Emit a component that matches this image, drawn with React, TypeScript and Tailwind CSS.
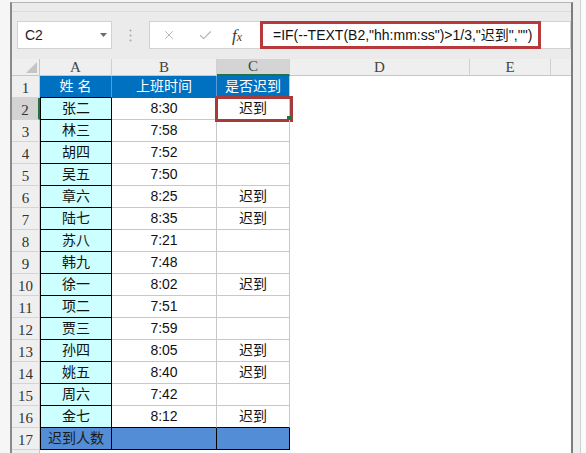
import { X, Check } from 'lucide-react'

const ROWS: { name: string; time: string; late: boolean }[] = [
  { name: '张二', time: '8:30', late: true },
  { name: '林三', time: '7:58', late: false },
  { name: '胡四', time: '7:52', late: false },
  { name: '吴五', time: '7:50', late: false },
  { name: '章六', time: '8:25', late: true },
  { name: '陆七', time: '8:35', late: true },
  { name: '苏八', time: '7:21', late: false },
  { name: '韩九', time: '7:48', late: false },
  { name: '徐一', time: '8:02', late: true },
  { name: '项二', time: '7:51', late: false },
  { name: '贾三', time: '7:59', late: false },
  { name: '孙四', time: '8:05', late: true },
  { name: '姚五', time: '8:40', late: true },
  { name: '周六', time: '7:42', late: false },
  { name: '金七', time: '8:12', late: true },
]

const sans = "font-['Liberation_Sans','Noto_Sans_CJK_SC',sans-serif]"
const serif = "font-['Liberation_Serif','Noto_Sans_CJK_SC',serif]"

function RowHead({ n, active }: { n?: number; active?: boolean }) {
  return (
    <div
      className={`w-[28px] shrink-0 flex items-end justify-center pb-[1px] text-[15px] leading-none text-[#333] border-b border-[#d4d4d4] ${serif} ${
        active ? 'bg-[#d3d3d3] border-r-2 border-r-[#217346]' : 'bg-[#efefef] border-r border-r-[#c6c6c6]'
      }`}
    >
      {n}
    </div>
  )
}

function ColHead({ label, w, active }: { label: string; w: string; active?: boolean }) {
  return (
    <div
      className={`${w} shrink-0 flex items-center justify-center text-[15px] text-[#444] border-r border-[#d0d0d0] ${serif} ${
        active ? 'bg-[#d4d4d4] border-b-2 border-b-[#217346]' : 'bg-[#efefef] border-b border-b-[#c6c6c6]'
      }`}
    >
      {label}
    </div>
  )
}

export default function App() {
  return (
    <div className={`w-[586px] h-[453px] overflow-hidden bg-[#f6f6f6] flex ${sans}`}>
      <div className="w-[10px] shrink-0" />
      <div className="w-[563px] shrink-0 mt-[2px] flex flex-col border-t border-t-[#b4b4b4] border-l-2 border-r-2 border-l-[#8a8a8a] border-r-[#7d7d7d] bg-[#ebebeb]">
        <div className="h-[9px] shrink-0 border-b border-[#dcdcdc]" />

        {/* formula bar */}
        <div className="h-[47px] shrink-0 flex items-start pt-[9px]">
          <div className="ml-[5px] w-[95px] h-[28px] bg-white border border-[#d2d2d2] flex items-center justify-between pl-[7px] pr-[3px]">
            <span className="text-[14px] text-[#222]">C2</span>
            <svg width="9" height="6" viewBox="0 0 9 6">
              <path d="M1 1h7L4.5 5z" fill="#6b6b6b" />
            </svg>
          </div>
          <div className="w-[37px] h-[28px] flex items-center justify-center">
            <svg width="3" height="13" viewBox="0 0 3 13">
              <circle cx="1.5" cy="1.5" r="1" fill="#a8a8a8" />
              <circle cx="1.5" cy="6.5" r="1" fill="#a8a8a8" />
              <circle cx="1.5" cy="11.5" r="1" fill="#a8a8a8" />
            </svg>
          </div>
          <div className="flex-1 h-[28px] bg-white border border-[#d2d2d2] flex items-stretch">
            <div className="w-[110px] shrink-0 flex items-center">
              <X className="ml-[12px] w-[14px] h-[14px] text-[#b3b3b3]" strokeWidth={1.6} />
              <Check className="ml-[22px] w-[15px] h-[15px] text-[#b3b3b3]" strokeWidth={1.8} />
              <span className={`ml-[19px] italic text-[17px] leading-none text-[#3a3a3a] ${serif}`}>
                f<span className="text-[12px]">x</span>
              </span>
            </div>
            <div className="-my-px w-[281px] shrink-0 border-[3px] border-[#b8393b] flex items-center pl-[10px] text-[14px] text-[#111] whitespace-nowrap">
              =IF(--TEXT(B2,"hh:mm:ss")&gt;1/3,"迟到","")
            </div>
          </div>
        </div>

        {/* grid */}
        <div className="flex-1 flex flex-col bg-white">
          <div className="h-[17px] shrink-0 flex">
            <div className="w-[28px] shrink-0 bg-[#efefef] border-r border-b border-[#c6c6c6] flex items-end justify-end p-[2px]">
              <svg width="11" height="11" viewBox="0 0 11 11">
                <path d="M11 0V11H0z" fill="#c4c4c4" />
              </svg>
            </div>
            <ColHead label="A" w="w-[72px]" />
            <ColHead label="B" w="w-[105px]" />
            <ColHead label="C" w="w-[73px]" active />
            <ColHead label="D" w="w-[180px]" />
            <ColHead label="E" w="w-[81px]" />
            <div className="flex-1 bg-[#efefef] border-b border-[#c6c6c6]" />
          </div>

          {/* row 1 */}
          <div className="h-[22px] shrink-0 flex text-[14px]">
            <RowHead n={1} />
            <div className="w-[72px] shrink-0 bg-[#0070c0] text-white flex items-center justify-center border-r border-r-[#5b9bd5] border-b border-b-black">
              姓&nbsp;名
            </div>
            <div className="w-[105px] shrink-0 bg-[#0070c0] text-white flex items-center justify-center border-r border-r-[#5b9bd5] border-b border-b-[#0070c0]">
              上班时间
            </div>
            <div className="w-[73px] shrink-0 bg-[#0070c0] text-white flex items-center justify-center border-r border-r-[#c6c6c6] border-b border-b-[#0070c0]">
              是否迟到
            </div>
            <div className="flex-1" />
          </div>

          {ROWS.map((r, i) => {
            const last = i === ROWS.length - 1
            const gridB = last ? 'border-b-black' : 'border-b-[#c8c8c8]'
            return (
              <div key={i} className="h-[22px] shrink-0 flex text-[14px] text-[#111]">
                <RowHead n={i + 2} active={i === 0} />
                <div className="w-[72px] shrink-0 bg-[#ccffff] flex items-center justify-center border-l border-r border-b border-black">
                  {r.name}
                </div>
                <div className={`w-[105px] shrink-0 flex items-center justify-center border-r border-r-[#c8c8c8] border-b ${gridB}`}>
                  {r.time}
                </div>
                <div className={`relative w-[73px] shrink-0 flex items-center justify-center border-r border-r-[#c8c8c8] border-b ${gridB}`}>
                  {r.late ? '迟到' : ''}
                  {i === 0 && (
                    <div className="absolute -left-[2px] -top-[2px] w-[78px] h-[26px] border-[3px] border-[#a53b3b]">
                      <div className="absolute -right-[1px] -bottom-[1px] w-[4px] h-[4px] bg-[#217346]" />
                    </div>
                  )}
                </div>
                <div className="flex-1" />
              </div>
            )
          })}

          {/* row 17 */}
          <div className="h-[22px] shrink-0 flex text-[14px] text-[#1a1a1a]">
            <RowHead n={17} />
            <div className="w-[72px] shrink-0 bg-[#538dd5] flex items-center justify-center border-l border-r border-b border-black">
              迟到人数
            </div>
            <div className="w-[105px] shrink-0 bg-[#538dd5] border-r border-b border-black" />
            <div className="w-[73px] shrink-0 bg-[#538dd5] border-r border-b border-black" />
            <div className="flex-1" />
          </div>
          <div className="h-[22px] shrink-0 flex">
            <RowHead />
          </div>
        </div>
      </div>
      <div className="w-[7px] shrink-0 bg-[#efefef]" />
      <div className="w-[6px] shrink-0 border-l border-[#cfcfcf] bg-[#fafafa]" />
    </div>
  )
}
